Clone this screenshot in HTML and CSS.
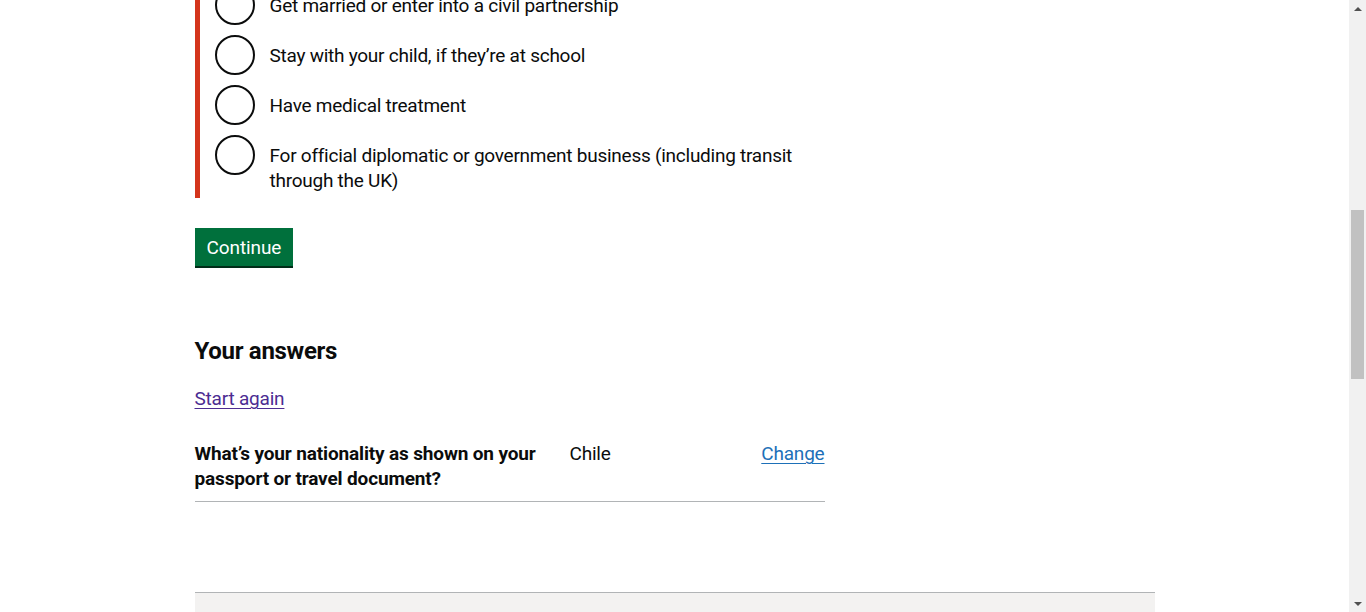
FILE: index.html
```html
<!DOCTYPE html>
<html lang="en">
<head>
<meta charset="utf-8">
<title>Check if you need a UK visa - GOV.UK</title>
<link rel="stylesheet" href="styles.css">
</head>
<body>
<div class="viewport">
  <div class="width-container">
    <main class="main-wrapper">
      <div class="column-two-thirds">
        <form class="question-form">
          <fieldset class="form-group form-group-error" aria-label="What are you coming to the UK to do?">
            <div class="radios">
              <div class="radio-item"><input class="radio-input" type="radio" name="purpose" id="p6"><label class="radio-label" for="p6">Get married or enter into a civil partnership</label></div>
              <div class="radio-item"><input class="radio-input" type="radio" name="purpose" id="p7"><label class="radio-label" for="p7">Stay with your child, if they’re at school</label></div>
              <div class="radio-item"><input class="radio-input" type="radio" name="purpose" id="p8"><label class="radio-label" for="p8">Have medical treatment</label></div>
              <div class="radio-item"><input class="radio-input" type="radio" name="purpose" id="p9"><label class="radio-label" for="p9">For official diplomatic or government business (including transit through the UK)</label></div>
            </div>
          </fieldset>
          <button class="button" type="submit">Continue</button>
        </form>

        <section class="answers">
          <h2 class="answers-heading">Your answers</h2>
          <p class="start-again"><a class="link link-visited" href="#">Start again</a></p>
          <dl class="summary-list">
            <div class="summary-row">
              <dt class="summary-key">What’s your nationality as shown on your passport or travel document?</dt>
              <dd class="summary-value">Chile</dd>
              <dd class="summary-actions"><a class="link" href="#">Change</a></dd>
            </div>
          </dl>
        </section>
      </div>
      <div class="feedback" aria-label="Page feedback"></div>
    </main>
  </div>
</div>
<div class="scrollbar" aria-hidden="true">
  <div class="scroll-btn"><span class="arrow-up"></span></div>
  <div class="scroll-track"><div class="scroll-thumb"></div></div>
  <div class="scroll-btn"><span class="arrow-down"></span></div>
</div>
</body>
</html>
```
FILE: styles.css
```css
html,
body {
  height: 100%;
}

body {
  margin: 0;
  display: flex;
  overflow: hidden;
  background: #ffffff;
  color: #0b0c0c;
  font-family: Roboto, "Liberation Sans", Arial, sans-serif;
}

a {
  color: #1d70b8;
}

.viewport {
  flex: 1 1 auto;
  min-width: 0;
  overflow: hidden;
}

.width-container {
  max-width: 960px;
  margin: 0 auto;
}

.main-wrapper {
  display: block;
}

.column-two-thirds {
  width: 630px;
}

/* Form */
.question-form {
  margin: 0;
}

.form-group {
  margin: -15px 0 30px;
  padding: 0;
  border: 0;
  min-width: 0;
}

.form-group-error {
  border-left: 5px solid #d4351c;
  padding-left: 15px;
}

.radios {
  display: flex;
  flex-direction: column;
  gap: 10px;
}

.radio-item {
  display: flex;
  align-items: flex-start;
  min-height: 40px;
}

.radio-input {
  appearance: none;
  -webkit-appearance: none;
  flex: 0 0 auto;
  width: 40px;
  height: 40px;
  margin: 0;
  border: 2px solid #0b0c0c;
  border-radius: 50%;
  background: #ffffff;
  box-sizing: border-box;
}

.radio-label {
  padding: 8px 15px 5px;
  font-size: 19px;
  line-height: 25px;
  letter-spacing: -0.25px;
}

/* Button */
.button {
  display: inline-block;
  margin: 0 0 32px;
  padding: 8px 10px 7px;
  border: 2px solid transparent;
  border-radius: 0;
  background: #00703c;
  box-shadow: 0 2px 0 #002d18;
  color: #ffffff;
  font-family: inherit;
  font-size: 19px;
  line-height: 19px;
  letter-spacing: -0.1px;
  cursor: pointer;
}

/* Answers */
.answers {
  padding-top: 38px;
}

.answers-heading {
  margin: 0 0 20px;
  font-size: 24px;
  line-height: 30px;
  font-weight: 700;
  letter-spacing: -0.3px;
}

.start-again {
  margin: 0 0 20px;
  font-size: 19px;
  line-height: 25px;
  letter-spacing: -0.2px;
}

.link {
  color: #1d70b8;
  text-decoration-thickness: 1px;
  text-underline-offset: 3px;
}

.link-visited {
  color: #4c2c92;
}

.summary-list {
  margin: 0 0 90px;
}

.summary-row {
  display: grid;
  grid-template-columns: 375px 1fr auto;
  border-bottom: 1px solid #b1b4b6;
  padding: 10px 0;
  font-size: 19px;
  line-height: 25px;
}

.summary-key {
  margin: 0;
  padding-right: 20px;
  font-weight: 700;
  letter-spacing: -0.15px;
}

.summary-value {
  margin: 0;
  letter-spacing: -0.2px;
}

.summary-actions {
  margin: 0;
  text-align: right;
  letter-spacing: -0.2px;
}

/* Feedback block at the foot of the content */
.feedback {
  height: 60px;
  border-top: 1px solid #b1b4b6;
  background: #f3f2f1;
}

/* Window scrollbar */
.scrollbar {
  flex: 0 0 17px;
  display: flex;
  flex-direction: column;
  background: #f1f1f1;
}

.scroll-btn {
  flex: 0 0 17px;
  display: flex;
  align-items: center;
  justify-content: center;
}

.arrow-up,
.arrow-down {
  width: 0;
  height: 0;
  border-left: 4px solid transparent;
  border-right: 4px solid transparent;
}

.arrow-up {
  border-bottom: 4px solid #505050;
}

.arrow-down {
  border-top: 4px solid #505050;
}

.scroll-track {
  flex: 1 1 auto;
  padding: 0 2px;
}

.scroll-thumb {
  margin-top: 193px;
  height: 169px;
  background: #c1c1c1;
}
```
